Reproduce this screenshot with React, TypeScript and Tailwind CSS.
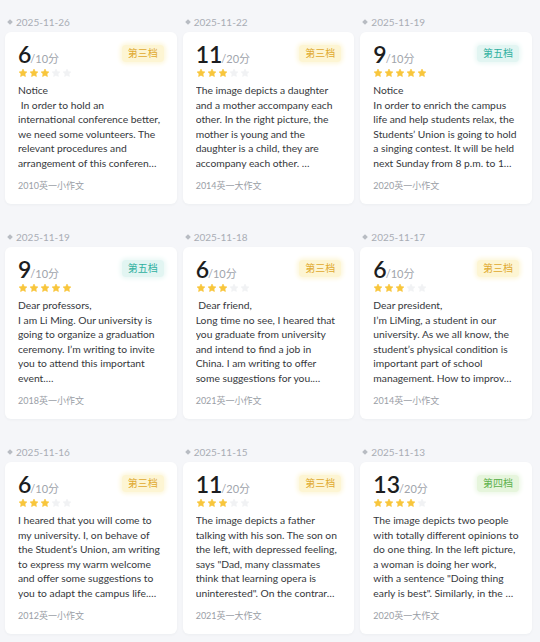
import React from 'react';

type Level = 'three' | 'four' | 'five';

type Essay = {
  date: string;
  score: number;
  total: number;
  level: Level;
  stars: number;
  lines: string[];
  tag: string;
};

const essays: Essay[] = [
  {
    date: '2025-11-26',
    score: 6,
    total: 10,
    level: 'three',
    stars: 3,
    lines: [
      'Notice',
      '\u00a0In order to hold an',
      'international conference better,',
      'we need some volunteers. The',
      'relevant procedures and',
      'arrangement of this conferen…',
    ],
    tag: '2010英一小作文',
  },
  {
    date: '2025-11-22',
    score: 11,
    total: 20,
    level: 'three',
    stars: 3,
    lines: [
      'The image depicts a daughter',
      'and a mother accompany each',
      'other. In the right picture, the',
      'mother is young and the',
      'daughter is a child, they are',
      'accompany each other. …',
    ],
    tag: '2014英一大作文',
  },
  {
    date: '2025-11-19',
    score: 9,
    total: 10,
    level: 'five',
    stars: 5,
    lines: [
      'Notice',
      'In order to enrich the campus',
      'life and help students relax, the',
      'Students\u2019 Union is going to hold',
      'a singing contest. It will be held',
      'next Sunday from 8 p.m. to 1…',
    ],
    tag: '2020英一小作文',
  },
  {
    date: '2025-11-19',
    score: 9,
    total: 10,
    level: 'five',
    stars: 5,
    lines: [
      'Dear professors,',
      'I am Li Ming. Our university is',
      'going to organize a graduation',
      'ceremony. I\u2019m writing to invite',
      'you to attend this important',
      'event.…',
    ],
    tag: '2018英一小作文',
  },
  {
    date: '2025-11-18',
    score: 6,
    total: 10,
    level: 'three',
    stars: 3,
    lines: [
      '\u00a0Dear friend,',
      'Long time no see, I heared that',
      'you graduate from university',
      'and intend to find a job in',
      'China. I am writing to offer',
      'some suggestions for you.…',
    ],
    tag: '2021英一小作文',
  },
  {
    date: '2025-11-17',
    score: 6,
    total: 10,
    level: 'three',
    stars: 3,
    lines: [
      'Dear president,',
      'I\u2019m LiMing, a student in our',
      'university. As we all know, the',
      'student\u2019s physical condition is',
      'important part of school',
      'management. How to improv…',
    ],
    tag: '2014英一小作文',
  },
  {
    date: '2025-11-16',
    score: 6,
    total: 10,
    level: 'three',
    stars: 3,
    lines: [
      'I heared that you will come to',
      'my university. I, on behave of',
      'the Student\u2019s Union, am writing',
      'to express my warm welcome',
      'and offer some suggestions to',
      'you to adapt the campus life.…',
    ],
    tag: '2012英一小作文',
  },
  {
    date: '2025-11-15',
    score: 11,
    total: 20,
    level: 'three',
    stars: 3,
    lines: [
      'The image depicts a father',
      'talking with his son. The son on',
      'the left, with depressed feeling,',
      'says "Dad, many classmates',
      'think that learning opera is',
      'uninterested". On the contrar…',
    ],
    tag: '2021英一大作文',
  },
  {
    date: '2025-11-13',
    score: 13,
    total: 20,
    level: 'four',
    stars: 4,
    lines: [
      'The image depicts two people',
      'with totally different opinions to',
      'do one thing. In the left picture,',
      'a woman is doing her work,',
      'with a sentence "Doing thing',
      'early is best". Similarly, in the …',
    ],
    tag: '2020英一大作文',
  },
];

const levelText: Record<Level, string> = {
  three: '第三档',
  four: '第四档',
  five: '第五档',
};

const levelStyle: Record<Level, string> = {
  three: 'bg-[#fdf5d3] text-[#e0a92e] shadow-[0_0_4px_2px_#fdf7dc]',
  four: 'bg-[#e6f5dc] text-[#5bb04a] shadow-[0_0_4px_2px_#eef8e8]',
  five: 'bg-[#e2f5f2] text-[#2fb0a0] shadow-[0_0_4px_2px_#ebf8f6]',
};

function Star({ on }: { on: boolean }) {
  return (
    <svg viewBox="0 0 24 24" className="w-[10px] h-[10px]">
      <path
        d="M12 2.5l2.9 6 6.5.9-4.7 4.6 1.1 6.5L12 17.4l-5.8 3.1 1.1-6.5L2.6 9.4l6.5-.9z"
        fill={on ? '#f8c63c' : '#f1f2f4'}
        stroke={on ? '#f8c63c' : '#f1f2f4'}
        strokeWidth="1.5"
        strokeLinejoin="round"
      />
    </svg>
  );
}

function EssayCard({ e }: { e: Essay }) {
  return (
    <div className="flex flex-col">
      <div className="flex items-center gap-[4px] pl-[3px] h-[14px] mb-[3px] text-[10px] text-[#a9adb5]">
        <span className="w-[4px] h-[4px] rotate-45 bg-[#b8bcc3]" />
        <span>{e.date}</span>
      </div>
      <div className="bg-white rounded-[6px] h-[172px] pt-[10px] px-[13px] pb-[11px] shadow-[0_1px_3px_rgba(30,40,60,0.04)] flex flex-col">
        <div className="flex justify-between items-start h-[24px]">
          <div className="flex items-baseline leading-[24px]">
            <span className="text-[23px] font-semibold text-[#1c1d20]">{e.score}</span>
            <span className="text-[11px] text-[#a0a4ab] ml-[-1px]">/{e.total}分</span>
          </div>
          <span
            className={`mt-[3px] h-[17px] px-[6px] rounded-[4px] text-[10px] leading-[17px] ${levelStyle[e.level]}`}
          >
            {levelText[e.level]}
          </span>
        </div>
        <div className="flex gap-[1px] mt-[2px] h-[10px]">
          {[0, 1, 2, 3, 4].map((i) => (
            <Star key={i} on={i < e.stars} />
          ))}
        </div>
        <div className="mt-[5px] text-[10.3px] leading-[14.5px] text-[#36383c]">
          {e.lines.map((l, i) => (
            <div key={i} className="whitespace-pre overflow-hidden">
              {l}
            </div>
          ))}
        </div>
        <div className="mt-[9px] text-[9px] leading-[14px] text-[#9a9ea6]">{e.tag}</div>
      </div>
    </div>
  );
}

export default function App() {
  return (
    <main
      className="min-h-screen bg-[#f5f6f9] pt-[15px] pl-[5px] pr-[8px] pb-[8px]"
      style={{ fontFamily: 'Lato, "Noto Sans CJK SC", sans-serif' }}
    >
      <div className="grid grid-cols-3 gap-x-[6px] gap-y-[26px]">
        {essays.map((e, i) => (
          <EssayCard key={i} e={e} />
        ))}
      </div>
    </main>
  );
}
